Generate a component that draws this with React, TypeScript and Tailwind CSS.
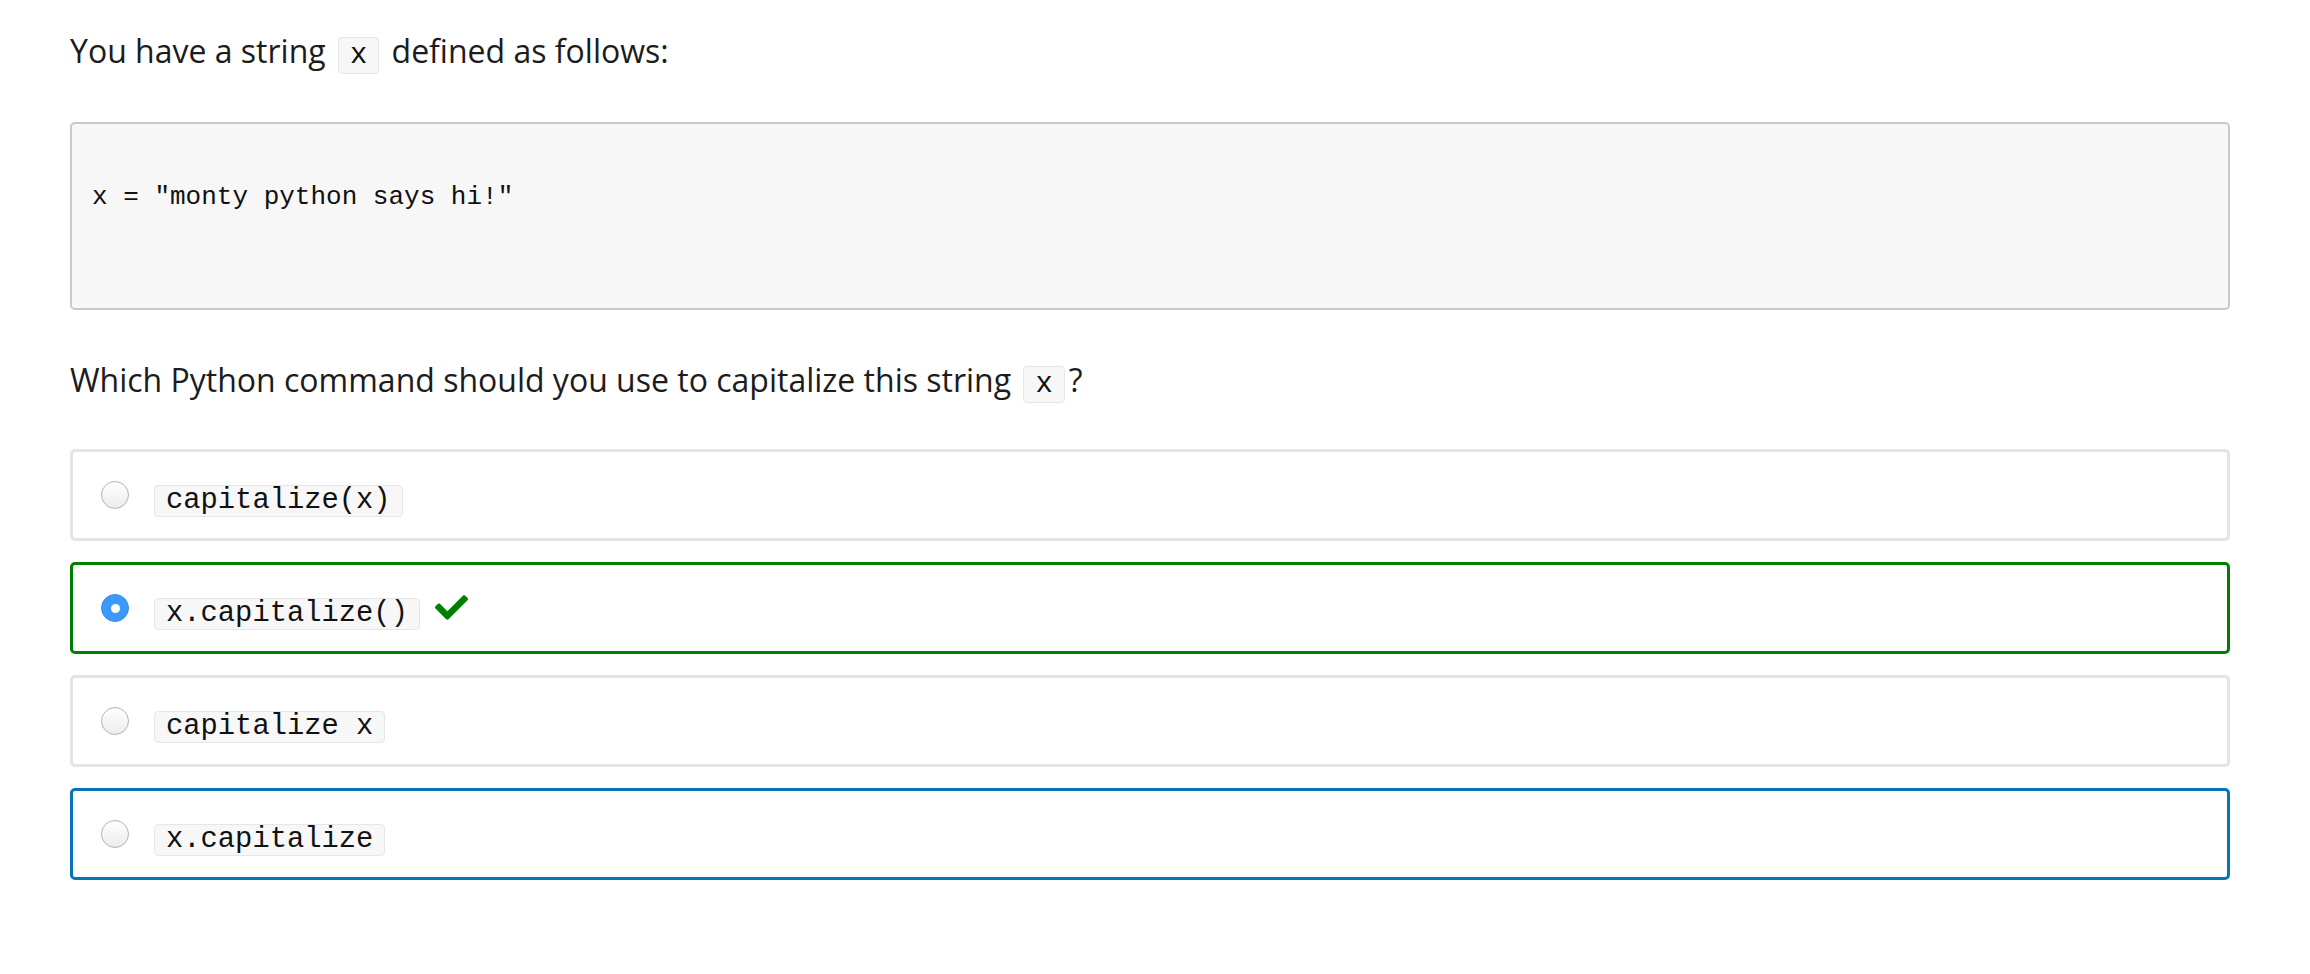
import React from "react";
import { FaCheck } from "react-icons/fa";

type Choice = {
	label: string;
	state: "idle" | "correct" | "focus";
	checked?: boolean;
};

const choices: Choice[] = [
	{ label: "capitalize(x)", state: "idle" },
	{ label: "x.capitalize()", state: "correct", checked: true },
	{ label: "capitalize x", state: "idle" },
	{ label: "x.capitalize", state: "focus" },
];

function Code({ children }: { children: React.ReactNode }) {
	return (
		<code className="mx-[4px] rounded-[4px] border border-[#e6e6e6] bg-[#f7f7f7] px-[11px] py-[1px] font-['Liberation_Mono',monospace] text-[28.8px] leading-none text-[#111]">
			{children}
		</code>
	);
}

function Radio({ checked }: { checked?: boolean }) {
	if (checked) {
		return (
			<span className="flex h-[28px] w-[28px] shrink-0 items-center justify-center rounded-full border border-[#3a8ee6] bg-[#3b99fc]">
				<span className="h-[9px] w-[9px] rounded-full bg-white" />
			</span>
		);
	}
	return (
		<span className="h-[28px] w-[28px] shrink-0 rounded-full border-[1.5px] border-[#b3b3b3] bg-gradient-to-b from-white to-[#ececec]" />
	);
}

export default function App() {
	const borders = {
		idle: "border-[#e4e4e4]",
		correct: "border-[#008000]",
		focus: "border-[#0874b8]",
	};

	return (
		<div className="min-h-screen w-full bg-white pt-[27px] pl-[70px] pr-[80px] font-['Open_Sans',sans-serif] text-[#1c1c1c]">
			{/* Prompt */}
			<p className="text-[32px] leading-[48px]">
				You have a string <Code>x</Code> defined as follows:
			</p>

			{/* Code block */}
			<pre className="mt-[47px] box-border h-[188px] rounded-[5px] border-2 border-[#c9c9c9] bg-[#f7f7f7] pt-[55px] pl-[20px] font-['Liberation_Mono',monospace] text-[26px] leading-[37px] text-[#111]">
				x = "monty python says hi!"
			</pre>

			<p className="mt-[46px] text-[32px] leading-[48px]">
				Which Python command should you use to capitalize this string <Code>x</Code>?
			</p>

			{/* Answers */}
			<div className="mt-[45px] flex flex-col gap-[21px]">
				{choices.map((c) => (
					<div
						key={c.label}
						className={`box-border flex h-[92px] items-center rounded-[5px] border-[3px] pl-[28px] ${borders[c.state]}`}
					>
						<Radio checked={c.checked} />
						<div className="ml-[21px] mt-[12px] flex items-center">
							<Code>{c.label}</Code>
							{c.state === "correct" && (
								<FaCheck className="ml-[11px] -mt-[12px] text-[#008000]" size={33} />
							)}
						</div>
					</div>
				))}
			</div>
		</div>
	);
}
